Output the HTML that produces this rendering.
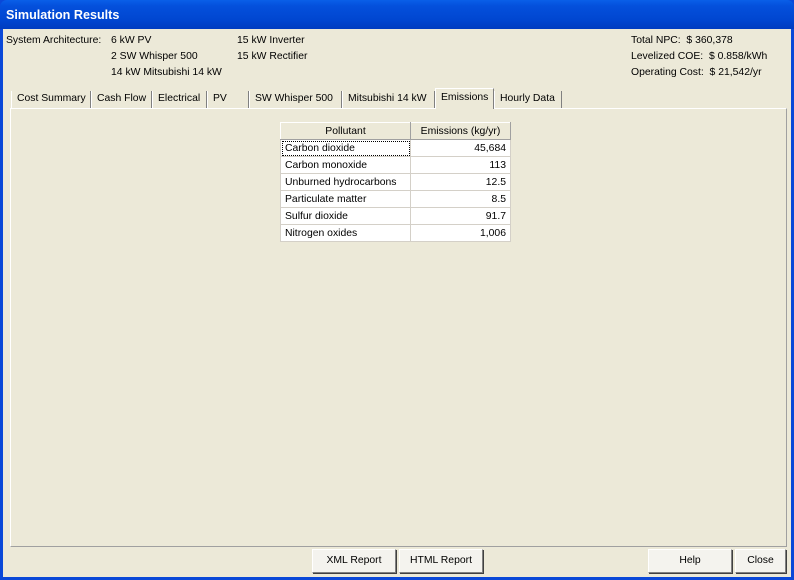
<!DOCTYPE html>
<html><head><style>
*{margin:0;padding:0;box-sizing:border-box}
body{width:794px;height:580px;overflow:hidden;background:#0a48d8;font-family:"Liberation Sans",sans-serif;font-size:10.4px;color:#000;position:relative}
.win{position:absolute;left:3px;top:0;width:788px;height:577px;background:#ece9d8}
.title{position:absolute;left:0;top:0;width:794px;height:29px;background:linear-gradient(#0a5fe8,#0450dc 20%,#0046d0 70%,#003cc0);border-radius:7px 7px 0 0;color:#fff;font-weight:bold;font-size:12.6px;padding:8px 0 0 6px}
.t{position:absolute;white-space:nowrap}
.tab{position:absolute;top:91px;height:17px;border-left:1px solid #fff;border-right:1px solid #808080;padding:2px 0 0 5px;white-space:nowrap}
.panel{position:absolute;left:10px;top:108px;width:777px;height:439px;border-left:1px solid #fff;border-top:1px solid #fff;border-right:1px solid #a0a0a0;border-bottom:1px solid #a0a0a0}
table{position:absolute;left:280px;top:122px;border-collapse:collapse;background:#fff;width:231px}
td{height:17px;border:1px solid #d4d0c8;padding:0 4px;white-space:nowrap}
th{height:17px;font-weight:normal;background:#ece9d8;border-right:1px solid #a0a0a0;border-bottom:1px solid #a0a0a0;border-left:1px solid #fff;border-top:1px solid #fff}
.btn{position:absolute;top:549px;height:24px;background:#f4f3ee;border:1px solid #fff;border-right-color:#808080;border-bottom-color:#808080;box-shadow:1px 1px 0 #404040;text-align:center;padding-top:5px}
</style></head><body>
<div class="title">Simulation Results</div>
<div class="win" style="top:29px;height:548px"></div>
<div class="t" style="left:6px;top:35px">System Architecture:</div>
<div class="t" style="left:111px;top:35px">6 kW PV</div>
<div class="t" style="left:111px;top:51px">2 SW Whisper 500</div>
<div class="t" style="left:111px;top:67px">14 kW Mitsubishi 14 kW</div>
<div class="t" style="left:237px;top:35px">15 kW Inverter</div>
<div class="t" style="left:237px;top:51px">15 kW Rectifier</div>
<div class="t" style="left:631px;top:35px">Total NPC:&nbsp; $ 360,378</div>
<div class="t" style="left:631px;top:51px">Levelized COE:&nbsp; $ 0.858/kWh</div>
<div class="t" style="left:631px;top:67px">Operating Cost:&nbsp; $ 21,542/yr</div>
<div class="panel"></div>
<div class="tab" style="left:11px;width:80px">Cost Summary</div>
<div class="tab" style="left:91px;width:61px">Cash Flow</div>
<div class="tab" style="left:152px;width:55px">Electrical</div>
<div class="tab" style="left:207px;width:42px">PV</div>
<div class="tab" style="left:249px;width:93px">SW Whisper 500</div>
<div class="tab" style="left:342px;width:93px">Mitsubishi 14 kW</div>
<div class="tab" style="left:435px;width:59px;top:88px;height:21px;background:#ece9d8;border-top:1px solid #fff;padding-top:3px">Emissions</div>
<div class="tab" style="left:494px;width:68px">Hourly Data</div>
<table>
<tr><th style="width:130px">Pollutant</th><th>Emissions (kg/yr)</th></tr>
<tr><td style="outline:1px dotted #000;outline-offset:-2px">Carbon dioxide</td><td align="right">45,684</td></tr>
<tr><td>Carbon monoxide</td><td align="right">113</td></tr>
<tr><td>Unburned hydrocarbons</td><td align="right">12.5</td></tr>
<tr><td>Particulate matter</td><td align="right">8.5</td></tr>
<tr><td>Sulfur dioxide</td><td align="right">91.7</td></tr>
<tr><td>Nitrogen oxides</td><td align="right">1,006</td></tr>
</table>
<div class="btn" style="left:312px;width:84px">XML Report</div>
<div class="btn" style="left:399px;width:84px">HTML Report</div>
<div class="btn" style="left:648px;width:84px">Help</div>
<div class="btn" style="left:735px;width:51px">Close</div>
</body></html>
